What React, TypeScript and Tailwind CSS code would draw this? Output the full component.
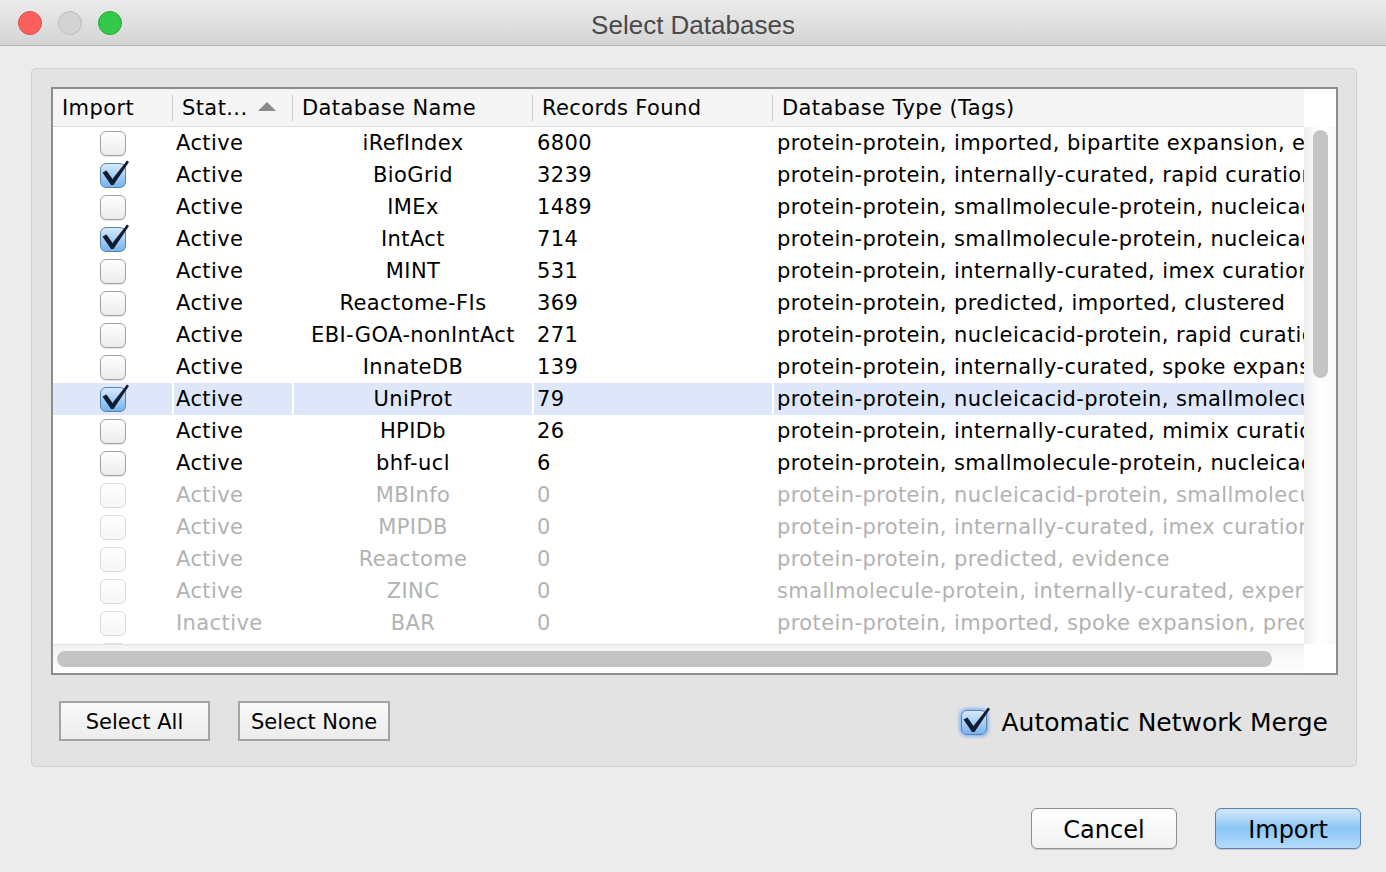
import React from "react";

type Row = {
  checked: boolean;
  status: string;
  name: string;
  records: string;
  type: string;
  disabled?: boolean;
  selected?: boolean;
};

const rows: Row[] = [
  { checked: false, status: "Active", name: "iRefIndex", records: "6800", type: "protein-protein, imported, bipartite expansion, evidence" },
  { checked: true, status: "Active", name: "BioGrid", records: "3239", type: "protein-protein, internally-curated, rapid curation, experimentally-determined" },
  { checked: false, status: "Active", name: "IMEx", records: "1489", type: "protein-protein, smallmolecule-protein, nucleicacid-protein" },
  { checked: true, status: "Active", name: "IntAct", records: "714", type: "protein-protein, smallmolecule-protein, nucleicacid-protein" },
  { checked: false, status: "Active", name: "MINT", records: "531", type: "protein-protein, internally-curated, imex curation" },
  { checked: false, status: "Active", name: "Reactome-FIs", records: "369", type: "protein-protein, predicted, imported, clustered" },
  { checked: false, status: "Active", name: "EBI-GOA-nonIntAct", records: "271", type: "protein-protein, nucleicacid-protein, rapid curation" },
  { checked: false, status: "Active", name: "InnateDB", records: "139", type: "protein-protein, internally-curated, spoke expansion" },
  { checked: true, status: "Active", name: "UniProt", records: "79", type: "protein-protein, nucleicacid-protein, smallmolecule-protein", selected: true },
  { checked: false, status: "Active", name: "HPIDb", records: "26", type: "protein-protein, internally-curated, mimix curation" },
  { checked: false, status: "Active", name: "bhf-ucl", records: "6", type: "protein-protein, smallmolecule-protein, nucleicacid-protein" },
  { checked: false, status: "Active", name: "MBInfo", records: "0", type: "protein-protein, nucleicacid-protein, smallmolecule-protein", disabled: true },
  { checked: false, status: "Active", name: "MPIDB", records: "0", type: "protein-protein, internally-curated, imex curation", disabled: true },
  { checked: false, status: "Active", name: "Reactome", records: "0", type: "protein-protein, predicted, evidence", disabled: true },
  { checked: false, status: "Active", name: "ZINC", records: "0", type: "smallmolecule-protein, internally-curated, experimentally-determined", disabled: true },
  { checked: false, status: "Inactive", name: "BAR", records: "0", type: "protein-protein, imported, spoke expansion, predicted", disabled: true },
  { checked: false, status: "Inactive", name: "DIP", records: "0", type: "protein-protein, internally-curated", disabled: true },
];

function CheckBox({ checked, disabled, glow }: { checked: boolean; disabled?: boolean; glow?: boolean }) {
  let cls = "relative w-[26px] h-[25px] rounded-[6px] border ";
  if (checked) {
    cls += "border-[#5f82ab] bg-linear-to-b from-[#d6e8fb] to-[#76b3ee]";
  } else if (disabled) {
    cls += "border-[#dcdcdc] bg-linear-to-b from-white to-[#f6f6f6]";
  } else {
    cls += "border-[#a2a2a2] bg-linear-to-b from-white to-[#ebebeb] shadow-[0_1px_1px_rgba(0,0,0,0.12)]";
  }
  if (glow) cls += " shadow-[0_0_3px_2px_rgba(110,170,240,0.7)]";
  return (
    <div className={cls}>
      {checked && (
        <svg className="absolute left-[-1px] top-[-7px] overflow-visible" width="32" height="32" viewBox="0 0 32 32">
          <path d="M2.5 15.5 L6.5 13.5 L12.5 22 L27 3.5 L29 5 L13.5 28 L11 28 Z" fill="#0f1d33" />
        </svg>
      )}
    </div>
  );
}

const COLS = [119, 120, 240, 240, 532];

export default function App() {
  return (
    <div
      className="w-[1386px] h-[872px] bg-[#ececec] overflow-hidden flex flex-col text-black"
      style={{ fontFamily: '"DejaVu Sans", Verdana, sans-serif' }}
    >
      {/* Title bar */}
      <div className="relative h-[46px] shrink-0 bg-linear-to-b from-[#ececec] to-[#d4d4d4] border-b border-[#b4b4b4] flex items-center">
        <div className="flex items-center gap-[16px] pl-[18px]">
          <div className="w-[24px] h-[24px] rounded-full bg-[#fc605c] border border-[#de4b46]" />
          <div className="w-[24px] h-[24px] rounded-full bg-[#d3d3d3] border border-[#bdbdbd]" />
          <div className="w-[24px] h-[24px] rounded-full bg-[#35c94b] border border-[#25a83a]" />
        </div>
        <div
          className="absolute inset-0 flex items-center justify-center text-[26px] text-[#4a4a4a] pt-[5px]"
          style={{ fontFamily: '"Liberation Sans", Arial, sans-serif' }}
        >
          Select Databases
        </div>
      </div>

      {/* Group panel */}
      <div className="ml-[31px] mt-[22px] w-[1326px] h-[699px] rounded-[5px] border border-[#d0d0d0] bg-[#e3e3e3] pl-[19px] pt-[18px] flex flex-col">
        {/* Table */}
        <div className="w-[1287px] h-[588px] border-2 border-[#8d8d8d] bg-white flex flex-col tracking-[0.4px]">
          <div className="flex h-[555px]">
            <div className="w-[1251px] flex flex-col">
              {/* Header */}
              <div className="h-[38px] flex bg-[#f5f5f5] border-b border-[#dcdcdc] text-[21px]">
                {["Import", "Stat...", "Database Name", "Records Found", "Database Type (Tags)"].map((h, i) => (
                  <div key={h} className="flex items-center h-full" style={{ width: COLS[i] }}>
                    {i > 0 && <div className="w-px h-[26px] bg-[#cfcfcf]" />}
                    <span className="ml-[9px] pt-[3px]">{h}</span>
                    {i === 1 && (
                      <svg className="ml-auto mr-[16px] mb-[2px]" width="18" height="9" viewBox="0 0 18 9">
                        <path d="M0 9 L9 0 L18 9 Z" fill="#8a8a8a" />
                      </svg>
                    )}
                  </div>
                ))}
              </div>
              {/* Rows */}
              <div className="h-[517px] overflow-hidden text-[21px]">
                {rows.map((r) => {
                  const txt = r.disabled ? "text-[#b2b2b2]" : "text-black";
                  const sel = r.selected ? "bg-[#dde7f9]" : "";
                  return (
                    <div key={r.name} className={`h-[32px] flex ${txt}`}>
                      <div className={`w-[119px] h-full flex items-center justify-center ${sel}`}>
                        <CheckBox checked={r.checked} disabled={r.disabled} />
                      </div>
                      <div className={`w-[120px] h-full flex items-center border-l-2 border-white pl-[2px] pt-[2px] ${sel}`}>
                        {r.status}
                      </div>
                      <div className={`w-[240px] h-full flex items-center justify-center border-l-2 border-white pt-[2px] ${sel}`}>
                        {r.name}
                      </div>
                      <div className={`w-[240px] h-full flex items-center border-l-2 border-white pl-[3px] pt-[2px] ${sel}`}>
                        {r.records}
                      </div>
                      <div className={`w-[532px] h-full flex items-center border-l-2 border-white pl-[3px] pt-[2px] whitespace-nowrap overflow-hidden ${sel}`}>
                        {r.type}
                      </div>
                    </div>
                  );
                })}
              </div>
            </div>
            {/* Vertical scrollbar */}
            <div className="w-[32px] flex flex-col">
              <div className="h-[38px] bg-white" />
              <div className="h-[517px] bg-linear-to-r from-[#f0f0f0] via-white to-[#f7f7f7] border-l border-[#ececec]">
                <div className="ml-[8px] mt-[3px] w-[15px] h-[248px] rounded-full bg-[#c4c4c4]" />
              </div>
            </div>
          </div>
          {/* Horizontal scrollbar */}
          <div className="flex h-[29px]">
            <div className="w-[1251px] h-full bg-linear-to-b from-[#f2f2f2] to-white border-t border-[#e2e2e2]">
              <div className="ml-[4px] mt-[6px] w-[1215px] h-[16px] rounded-full bg-[#c4c4c4]" />
            </div>
            <div className="w-[32px] h-full bg-white" />
          </div>
        </div>

        {/* Buttons inside panel */}
        <div className="w-[1287px] mt-[25px] flex items-center pl-[8px] pr-[10px] text-[21px]">
          <div className="w-[151px] h-[40px] pt-[3px] border-2 border-[#a3a3a3] bg-linear-to-b from-[#f9f9f9] to-[#ececec] flex items-center justify-center">
            Select All
          </div>
          <div className="ml-[28px] w-[152px] h-[40px] pt-[3px] border-2 border-[#a3a3a3] bg-linear-to-b from-[#f9f9f9] to-[#ececec] flex items-center justify-center">
            Select None
          </div>
          <div className="ml-auto flex items-center">
            <div className="mt-[4px]">
              <CheckBox checked glow />
            </div>
            <span className="ml-[14px] pt-[4px] text-[25px]">Automatic Network Merge</span>
          </div>
        </div>
      </div>

      {/* Bottom buttons */}
      <div className="mt-[41px] flex justify-end pr-[25px] gap-[38px] text-[24px]">
        <div className="w-[146px] h-[41px] pt-[2px] rounded-[6px] border border-[#8f8f8f] bg-linear-to-b from-white to-[#f1f1f1] shadow-[0_1px_1px_rgba(0,0,0,0.15)] flex items-center justify-center">
          Cancel
        </div>
        <div className="w-[146px] h-[41px] pt-[2px] rounded-[6px] border border-[#5b7fae] bg-linear-to-b from-[#d3e7fb] via-[#8cc6f6] to-[#b5dcfb] shadow-[0_1px_1px_rgba(0,0,0,0.15)] flex items-center justify-center">
          Import
        </div>
      </div>
    </div>
  );
}
